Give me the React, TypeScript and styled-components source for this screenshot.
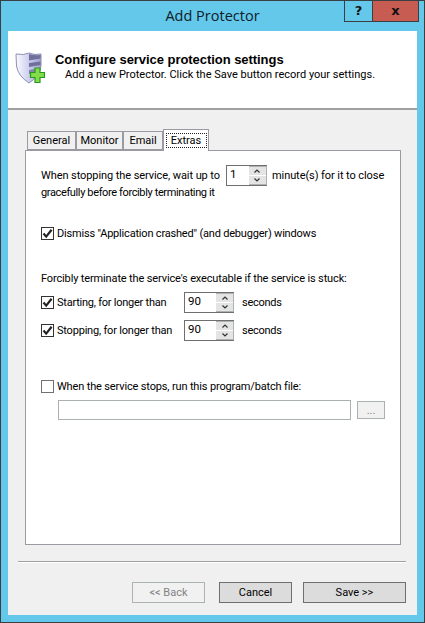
import styled, { createGlobalStyle } from 'styled-components';

const GlobalStyle = createGlobalStyle`
  html, body {
    margin: 0;
    padding: 0;
    background: #63c8ea;
  }
  * {
    box-sizing: border-box;
  }
`;

const Win = styled.div`
  width: 425px;
  height: 623px;
  background: #63c8ea;
  border: 1px solid #3a3f42;
  padding: 0 7px 7px;
  display: flex;
  flex-direction: column;
  font-family: 'Roboto', sans-serif;
  font-size: 11px;
  color: #000;
  position: relative;
  white-space: nowrap;
`;

const TitleBar = styled.div`
  height: 30px;
  flex: none;
  display: flex;
  align-items: center;
  justify-content: center;
  font-family: 'Open Sans', sans-serif;
  font-size: 14.5px;
  color: #10202a;
  padding-bottom: 1px;
`;

const Caption = styled.div`
  position: absolute;
  top: -1px;
  right: 5px;
  height: 22px;
  display: flex;
  border: 1px solid #3a3f42;
`;

const CaptionBtn = styled.div<{ $close?: boolean }>`
  width: ${(p) => (p.$close ? '46px' : '27px')};
  background: ${(p) => (p.$close ? '#c75c52' : 'transparent')};
  border-left: ${(p) => (p.$close ? '1px solid #3a3f42' : 'none')};
  display: flex;
  align-items: center;
  justify-content: center;
  font-family: 'DejaVu Sans', sans-serif;
  font-weight: bold;
  font-size: 13px;
  color: #111;
  padding-bottom: 2px;
`;

const Client = styled.div`
  flex: 1;
  background: #f0f0f0;
  display: flex;
  flex-direction: column;
`;

const Header = styled.div`
  height: 79px;
  flex: none;
  background: #fff;
  border-bottom: 2px solid #a0a0a0;
  display: flex;
  align-items: flex-start;
  padding: 21px 0 0 7px;
`;

const HeaderText = styled.div`
  margin-left: 10px;
`;

const HeaderTitle = styled.div`
  font-family: 'Liberation Sans', sans-serif;
  font-weight: bold;
  font-size: 13px;
  letter-spacing: -0.05px;
  line-height: 15px;
`;

const HeaderSub = styled.div`
  line-height: 15px;
  margin-left: 10px;
`;

const Body = styled.div`
  flex: 1;
  display: flex;
  flex-direction: column;
  padding: 19px 16px 0 17px;
`;

const Tabs = styled.div`
  display: flex;
  height: 21px;
  padding-left: 2px;
  flex: none;
  position: relative;
  z-index: 1;
`;

const Tab = styled.div<{ $w: number; $active?: boolean }>`
  width: ${(p) => p.$w}px;
  height: ${(p) => (p.$active ? '22px' : '19px')};
  margin-top: ${(p) => (p.$active ? '0' : '2px')};
  background: ${(p) => (p.$active ? '#fff' : '#f0f0f0')};
  border: 1px solid #9a9aa2;
  border-bottom: ${(p) => (p.$active ? 'none' : '1px solid #9a9aa2')};
  display: flex;
  align-items: center;
  justify-content: center;
`;

const Focus = styled.span`
  width: 41px;
  height: 15px;
  border: 1px dotted #222;
  display: flex;
  align-items: center;
  justify-content: center;
`;

const Panel = styled.div`
  width: 376px;
  height: 395px;
  flex: none;
  background: #fff;
  border: 1px solid #9a9aa2;
  padding: 13px 0 0 15px;
  display: flex;
  flex-direction: column;
`;

const WaitRow = styled.div`
  display: flex;
  align-items: center;
  height: 22px;
  letter-spacing: -0.08px;
`;

const PlainLine = styled.div<{ $mt?: number; $ls: number }>`
  line-height: 16px;
  margin-top: ${(p) => p.$mt ?? 0}px;
  letter-spacing: ${(p) => p.$ls}px;
`;

const CheckRow = styled.label<{ $mt?: number; $h?: number }>`
  display: flex;
  align-items: center;
  height: ${(p) => p.$h ?? 22}px;
  margin-top: ${(p) => p.$mt ?? 0}px;
`;

const CheckText = styled.span<{ $ls: number; $w?: number }>`
  letter-spacing: ${(p) => p.$ls}px;
  ${(p) => (p.$w ? `width: ${p.$w}px; flex: none;` : '')}
`;

const Box = styled.span`
  width: 13px;
  height: 13px;
  flex: none;
  background: #fff;
  border: 1px solid #333;
  display: flex;
  align-items: center;
  justify-content: center;
  margin-right: 3px;
`;

const EmptyBox = styled(Box)`
  border-color: #707070;
`;

const Unit = styled.span`
  margin-left: 8px;
  letter-spacing: -0.28px;
`;

const Spinner = styled.div<{ $w: number; $ml?: number; $mr?: number }>`
  width: ${(p) => p.$w}px;
  height: 21px;
  flex: none;
  display: flex;
  border: 1px solid #6f6f6f;
  border-right: none;
  margin: 0 ${(p) => p.$mr ?? 0}px 0 ${(p) => p.$ml ?? 0}px;
  background: #fff;
`;

const SpinnerValue = styled.div`
  flex: 1;
  padding: 1px 0 0 3px;
  font-size: 11.5px;
  line-height: 15px;
`;

const SpinButtons = styled.div`
  width: 18px;
  flex: none;
  display: flex;
  flex-direction: column;
  gap: 1px;
  background: #fff;
  border: 1px solid #adb2b5;
  border-left: none;
`;

const SpinButton = styled.div`
  flex: 1;
  background: #e4e4e4;
  display: flex;
  align-items: center;
  justify-content: center;
`;

const PathRow = styled.div`
  display: flex;
  align-items: center;
  margin: 6px 0 0 17px;
`;

const PathInput = styled.div`
  width: 293px;
  height: 20px;
  border: 1px solid #abb0b3;
  background: #fff;
`;

const BrowseBtn = styled.div`
  width: 28px;
  height: 18px;
  margin-left: 6px;
  border: 1px solid #abb0b3;
  background: #f1f1f1;
  color: #808080;
  display: flex;
  justify-content: center;
  align-items: center;
`;

const Separator = styled.div`
  height: 2px;
  flex: none;
  margin: 16px -5px 0 -7px;
  background: #a0a0a0;
  border-bottom: 1px solid #fff;
`;

const Footer = styled.div`
  display: flex;
  justify-content: flex-end;
  margin: 19px -5px 0 0;
  gap: 14px;
`;

const FooterBtn = styled.div<{ $w: number; $off?: boolean; $mr?: number }>`
  width: ${(p) => p.$w}px;
  height: 21px;
  border: 1px solid ${(p) => (p.$off ? '#adb2b5' : '#6f6f6f')};
  background: ${(p) => (p.$off ? '#f1f1f1' : '#dcdcdc')};
  color: ${(p) => (p.$off ? '#838383' : '#000')};
  margin-right: ${(p) => p.$mr ?? 0}px;
  display: flex;
  align-items: center;
  justify-content: center;
`;

const Check = () => (
  <svg width="11" height="11" viewBox="0 0 11 11">
    <path d="M1.5 5.5 L4.2 8.6 L9.6 1.8" fill="none" stroke="#222" strokeWidth="2.2" />
  </svg>
);

const Chevron = ({ up }: { up?: boolean }) => (
  <svg width="6" height="4" viewBox="0 0 6 4">
    <path d={up ? 'M0.5 3.5 L3 1 L5.5 3.5' : 'M0.5 0.5 L3 3 L5.5 0.5'} fill="none" stroke="#333" strokeWidth="1.2" />
  </svg>
);

const SpinControl = ({ value, w, ml, mr }: { value: string; w: number; ml?: number; mr?: number }) => (
  <Spinner $w={w} $ml={ml} $mr={mr}>
    <SpinnerValue>{value}</SpinnerValue>
    <SpinButtons>
      <SpinButton><Chevron up /></SpinButton>
      <SpinButton><Chevron /></SpinButton>
    </SpinButtons>
  </Spinner>
);

const ShieldSvg = styled.svg`
  flex: none;
`;

const ShieldIcon = () => (
  <ShieldSvg width="30" height="32" viewBox="0 0 30 32">
    <defs>
      <linearGradient id="sh" x1="0" x2="1" y1="0" y2="0">
        <stop offset="0" stopColor="#fafaff" />
        <stop offset="0.5" stopColor="#cfd0ef" />
        <stop offset="1" stopColor="#a0a0cc" />
      </linearGradient>
    </defs>
    <path d="M1 2 Q9 3.5 14 1 Q20 3.5 26 2 L26 14 Q25 24 14 31 Q3 24 1.5 14 Z" fill="url(#sh)" stroke="#8d8fb4" strokeWidth="1" />
    <path d="M14 2 Q20 4 25.5 3 L25.5 6.5 L14 8.5 Z" fill="#70709c" />
    <path d="M14 11 L25.5 9.5 L25.5 13 L14 15 Z" fill="#70709c" />
    <path d="M14 18 L25 16 L24 20 L14 22 Z" fill="#8484ae" />
    <path d="M20 16 H25 V20.5 H29.5 V25.5 H25 V30.5 H20 V25.5 H15.5 V20.5 H20 Z" fill="#86dc48" stroke="#249a22" strokeWidth="1.2" />
  </ShieldSvg>
);

export default function App() {
  return (
    <Win>
      <GlobalStyle />
      <TitleBar>Add Protector</TitleBar>
      <Caption>
        <CaptionBtn>?</CaptionBtn>
        <CaptionBtn $close>x</CaptionBtn>
      </Caption>
      <Client>
        <Header>
          <ShieldIcon />
          <HeaderText>
            <HeaderTitle>Configure service protection settings</HeaderTitle>
            <HeaderSub>Add a new Protector. Click the Save button record your settings.</HeaderSub>
          </HeaderText>
        </Header>
        <Body>
          <Tabs>
            <Tab $w={49}>General</Tab>
            <Tab $w={47}>Monitor</Tab>
            <Tab $w={40}>Email</Tab>
            <Tab $w={46} $active>
              <Focus>Extras</Focus>
            </Tab>
          </Tabs>
          <Panel>
            <WaitRow>
              When stopping the service, wait up to
              <SpinControl value="1" w={41} ml={6} mr={5} />
              minute(s) for it to close
            </WaitRow>
            <PlainLine $mt={-1} $ls={-0.37}>gracefully before forcibly terminating it</PlainLine>
            <CheckRow $mt={21}>
              <Box><Check /></Box>
              <CheckText $ls={-0.19}>Dismiss "Application crashed" (and debugger) windows</CheckText>
            </CheckRow>
            <PlainLine $mt={27} $ls={-0.14}>Forcibly terminate the service's executable if the service is stuck:</PlainLine>
            <CheckRow $mt={4}>
              <Box><Check /></Box>
              <CheckText $ls={-0.24} $w={127}>Starting, for longer than</CheckText>
              <SpinControl value="90" w={50} />
              <Unit>seconds</Unit>
            </CheckRow>
            <CheckRow $mt={6}>
              <Box><Check /></Box>
              <CheckText $ls={-0.2} $w={127}>Stopping, for longer than</CheckText>
              <SpinControl value="90" w={50} />
              <Unit>seconds</Unit>
            </CheckRow>
            <CheckRow $mt={37} $h={16}>
              <EmptyBox />
              <CheckText $ls={-0.15}>When the service stops, run this program/batch file:</CheckText>
            </CheckRow>
            <PathRow>
              <PathInput />
              <BrowseBtn>...</BrowseBtn>
            </PathRow>
          </Panel>
          <Separator />
          <Footer>
            <FooterBtn $w={73} $off>&lt;&lt; Back</FooterBtn>
            <FooterBtn $w={73} $mr={-3}>Cancel</FooterBtn>
            <FooterBtn $w={103}>Save &gt;&gt;</FooterBtn>
          </Footer>
        </Body>
      </Client>
    </Win>
  );
}
